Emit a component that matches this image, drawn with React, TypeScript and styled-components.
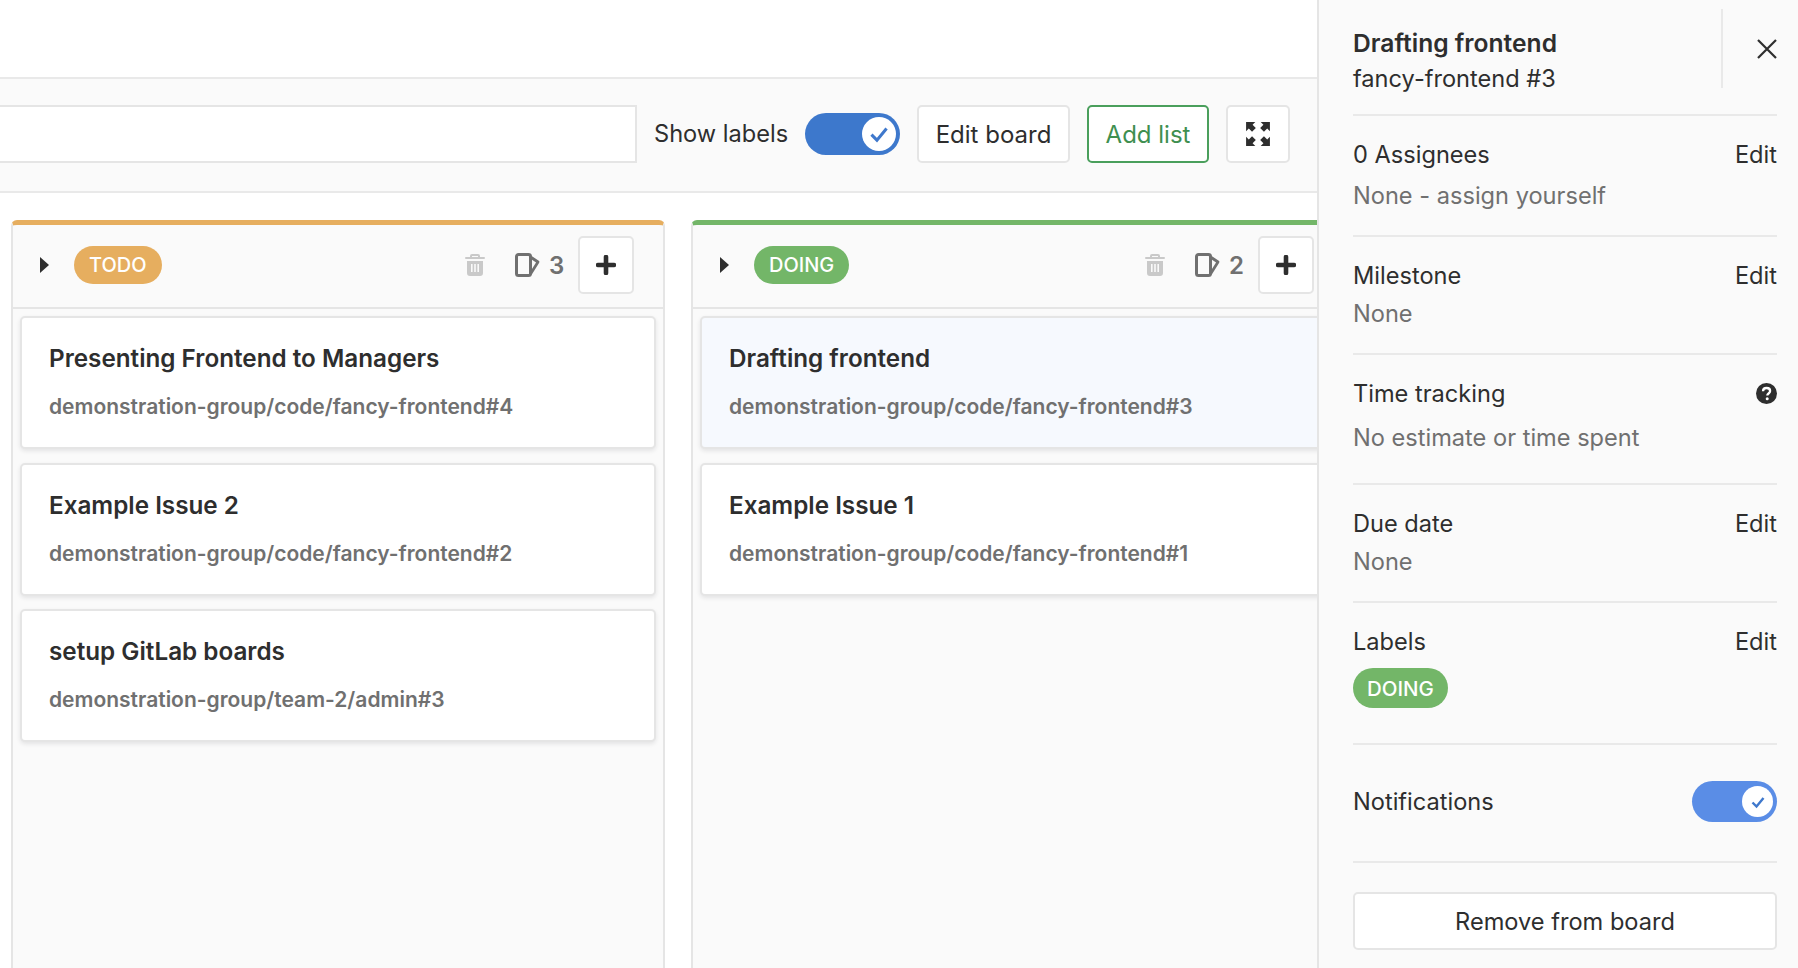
import { createGlobalStyle, styled } from "styled-components";

const GlobalStyle = createGlobalStyle`
    * {
        box-sizing: border-box;
    }
    html,
    body {
        margin: 0;
        height: 100%;
        overflow: hidden;
        background: #fff;
        font-family: Inter, "Liberation Sans", sans-serif;
        color: #2e2e2e;
    }
`;

const Page = styled.div`
    display: flex;
    width: 1798px;
    height: 968px;
    overflow: hidden;
`;

const Main = styled.div`
    flex: 0 0 1317px;
    display: flex;
    flex-direction: column;
    overflow: hidden;
`;

const TopBar = styled.div`
    height: 79px;
    flex: none;
    border-bottom: 2px solid #e9e9e9;
`;

const Toolbar = styled.div`
    height: 114px;
    flex: none;
    display: flex;
    align-items: center;
    background: #fafafa;
    border-bottom: 2px solid #e9e9e9;
    padding-bottom: 2px;
`;

const Search = styled.div`
    width: 637px;
    height: 58px;
    flex: none;
    background: #fff;
    border: 2px solid #e5e5e5;
    border-left: none;
`;

const ShowLabels = styled.span`
    margin-left: 17px;
    margin-top: -2px;
    font-size: 23.6px;
    width: 151px;
    flex: none;
    white-space: nowrap;
`;

const Toggle = styled.div<{ $w: number; $h: number; $color: string }>`
    width: ${(p) => p.$w}px;
    height: ${(p) => p.$h}px;
    flex: none;
    border-radius: ${(p) => p.$h / 2}px;
    background: ${(p) => p.$color};
    display: flex;
    align-items: center;
    justify-content: flex-end;
    padding-right: 4px;
`;

const Knob = styled.div<{ $size: number }>`
    width: ${(p) => p.$size}px;
    height: ${(p) => p.$size}px;
    border-radius: 50%;
    background: #fff;
    display: flex;
    align-items: center;
    justify-content: center;
`;

const Button = styled.div<{ $w: number; $green?: boolean }>`
    width: ${(p) => p.$w}px;
    height: 58px;
    flex: none;
    display: flex;
    align-items: center;
    justify-content: center;
    background: #fff;
    font-size: 24px;
    border-radius: 5px;
    border: 2px solid ${(p) => (p.$green ? "#4a9f5c" : "#e5e5e5")};
    color: ${(p) => (p.$green ? "#3f8f50" : "#2e2e2e")};
`;

const ToolbarButtons = styled.div`
    display: flex;
    gap: 17px;
    margin-left: 17px;
`;

const Board = styled.div`
    flex: 1;
    display: flex;
    gap: 26px;
    padding: 27px 0 0 11px;
    min-height: 0;
`;

const Column = styled.section<{ $color: string }>`
    flex: 0 0 652px;
    background: #fafafa;
    border: 2px solid #e5e5e5;
    border-top: 5px solid ${(p) => p.$color};
    border-bottom: none;
    border-radius: 6px 6px 0 0;
    display: flex;
    flex-direction: column;
`;

const ColumnHeader = styled.header`
    height: 84px;
    flex: none;
    display: flex;
    align-items: center;
    border-bottom: 2px solid #e5e5e5;
    padding: 0 29px 2px 27px;
`;

const Caret = styled.span`
    width: 0;
    height: 0;
    flex: none;
    border-left: 9px solid #2e2e2e;
    border-top: 8px solid transparent;
    border-bottom: 8px solid transparent;
`;

const Pill = styled.span<{ $color: string }>`
    display: inline-flex;
    align-items: center;
    justify-content: center;
    height: 38px;
    padding: 0 15px;
    border-radius: 19px;
    background: ${(p) => p.$color};
    color: #fff;
    font-size: 20px;
    font-weight: 500;
`;

const SideChip = styled(Pill)`
    height: 40px;
    border-radius: 20px;
    padding: 0 14px;
    font-size: 20.5px;
`;

const HeaderPill = styled.div`
    margin-left: 25px;
`;

const HeaderTools = styled.div`
    margin-left: auto;
    display: flex;
    align-items: center;
`;

const Count = styled.span`
    font-size: 24px;
    font-weight: 600;
    color: #707070;
    margin-left: 9px;
    width: 15px;
`;

const Trash = styled.svg`
    margin-right: 30px;
    flex: none;
`;

const AddButton = styled.div`
    width: 56px;
    height: 58px;
    margin-left: 14px;
    display: flex;
    align-items: center;
    justify-content: center;
    background: #fff;
    border: 2px solid #e5e5e5;
    border-radius: 5px;
`;

const Cards = styled.div`
    display: flex;
    flex-direction: column;
    gap: 13.5px;
    padding: 7px 7px;
`;

const Card = styled.article<{ $active?: boolean }>`
    height: 133px;
    flex: none;
    width: 636px;
    padding: 25px 27px 0;
    background: ${(p) => (p.$active ? "#f6f9fe" : "#fff")};
    border: 2px solid #e5e5e5;
    border-radius: 5px;
    box-shadow: 0 2px 4px rgba(31, 30, 36, 0.1);
`;

const CardTitle = styled.div`
    font-size: 24.25px;
    font-weight: 600;
    line-height: 32px;
    white-space: nowrap;
`;

const CardRef = styled.div`
    margin-top: 18px;
    font-size: 21px;
    font-weight: 600;
    line-height: 28px;
    color: #707070;
    white-space: nowrap;
`;

const Sidebar = styled.aside`
    flex: 1;
    background: #fafafa;
    border-left: 2px solid #e5e5e5;
    padding: 0 21px 0 34px;
    display: flex;
    flex-direction: column;
    font-size: 23.6px;
`;

const SideHead = styled.div`
    height: 116px;
    flex: none;
    border-bottom: 2px solid #e9e9e9;
    display: flex;
    padding-top: 9px;
`;

const SideTitles = styled.div`
    width: 370px;
    flex: none;
    height: 79px;
    border-right: 2px solid #e9e9e9;
    padding-top: 16px;
    line-height: 36px;
`;

const SideTitle = styled.div`
    font-weight: 600;
    font-size: 24.6px;
`;

const CloseBox = styled.div`
    flex: 1;
    display: flex;
    justify-content: flex-end;
    padding-top: 30px;
`;

const Block = styled.div<{ $h: number }>`
    height: ${(p) => p.$h}px;
    flex: none;
    border-bottom: 2px solid #e9e9e9;
`;

const BlockRow = styled.div<{ $top: number }>`
    display: flex;
    justify-content: space-between;
    align-items: center;
    height: 36px;
    margin-top: ${(p) => p.$top}px;
`;

const Muted = styled.div<{ $top: number }>`
    height: 36px;
    line-height: 36px;
    margin-top: ${(p) => p.$top}px;
    color: #707070;
`;

const ChipRow = styled.div`
    margin-top: 9px;
`;

const NotifyBlock = styled.div`
    height: 118px;
    flex: none;
    display: flex;
    align-items: center;
    justify-content: space-between;
    border-bottom: 2px solid #e9e9e9;
    padding-bottom: 3px;
`;

const RemoveButton = styled.div`
    height: 58px;
    flex: none;
    margin-top: 29px;
    display: flex;
    align-items: center;
    justify-content: center;
    background: #fff;
    border: 2px solid #e5e5e5;
    border-radius: 5px;
`;

const Check = ({ size, width }: { size: number; width: number }) => (
    <svg width={size} height={size} viewBox="0 0 16 16" fill="none">
        <path d="M2.5 8.5 6.5 12.5 13.5 4" stroke="#3f78cc" strokeWidth={width} />
    </svg>
);

const ExpandIcon = () => (
    <svg width="26" height="26" viewBox="0 0 24 24" fill="#2e2e2e">
        <path d="M1 1h8.500L7 3.500 10 6.500 6.500 10 3.500 7 1 9.500z" />
        <path d="M23 1h-8.500L17 3.500 14 6.500 17.500 10l3-3 2.500 2.500z" />
        <path d="M1 23h8.500L7 20.500l3-3L6.500 14l-3 3L1 14.500z" />
        <path d="M23 23h-8.500l2.500-2.500-3-3 3.500-3.500 3 3 2.500-2.500z" />
    </svg>
);

const TrashIcon = () => (
    <Trash width="20" height="22" viewBox="0 0 20 22" fill="#c9c9c9">
        <path d="M7 0h6a2 2 0 0 1 2 2v1h4a1 1 0 0 1 0 2H1a1 1 0 0 1 0-2h4V2a2 2 0 0 1 2-2zm0 2v1h6V2z" fillRule="evenodd" />
        <path d="M2 7h16v12a3 3 0 0 1-3 3H5a3 3 0 0 1-3-3zm4 3v8h1.600v-8zm3.200 0v8h1.600v-8zm3.200 0v8H14v-8z" fillRule="evenodd" />
    </Trash>
);

const IssueIcon = () => (
    <svg width="25" height="24" viewBox="0 0 25 24" fill="none">
        <path
            d="M3.500 1.500h10a2 2 0 0 1 2 2v17a2 2 0 0 1-2 2h-10a2 2 0 0 1-2-2v-17a2 2 0 0 1 2-2z"
            stroke="#707070"
            strokeWidth="3"
        />
        <path d="M15.500 4 23 9l-7.500 12" stroke="#707070" strokeWidth="2.800" strokeLinejoin="round" />
    </svg>
);

const PlusIcon = () => (
    <svg width="20" height="20" viewBox="0 0 20 20" fill="#2e2e2e">
        <path d="M7.700 2a2.300 2.300 0 0 1 4.600 0v5.700H18a2.300 2.300 0 0 1 0 4.600h-5.700V18a2.300 2.300 0 0 1-4.600 0v-5.700H2a2.300 2.300 0 0 1 0-4.600h5.700z" />
    </svg>
);

const CloseIcon = () => (
    <svg width="20" height="20" viewBox="0 0 20 20" fill="none">
        <path d="M1 1 19 19M19 1 1 19" stroke="#2e2e2e" strokeWidth="2.200" />
    </svg>
);

const HelpIcon = () => (
    <svg width="21" height="21" viewBox="0 0 21 21">
        <circle cx="10.500" cy="10.500" r="10.500" fill="#2e2e2e" />
        <path
            d="M7 8.200c0-2 1.600-3.200 3.600-3.200s3.500 1.200 3.500 3c0 2.400-2.800 2.500-2.800 4.400"
            fill="none"
            stroke="#fff"
            strokeWidth="2.300"
        />
        <circle cx="11.200" cy="15.700" r="1.500" fill="#fff" />
    </svg>
);

const columns = [
    {
        label: "TODO",
        color: "#e6ae5f",
        count: 3,
        cards: [
            { title: "Presenting Frontend to Managers", ref: "demonstration-group/code/fancy-frontend#4" },
            { title: "Example Issue 2", ref: "demonstration-group/code/fancy-frontend#2" },
            { title: "setup GitLab boards", ref: "demonstration-group/team-2/admin#3" },
        ],
    },
    {
        label: "DOING",
        color: "#73b668",
        count: 2,
        cards: [
            { title: "Drafting frontend", ref: "demonstration-group/code/fancy-frontend#3", active: true },
            { title: "Example Issue 1", ref: "demonstration-group/code/fancy-frontend#1" },
        ],
    },
];

export default function App() {
    return (
        <Page>
            <GlobalStyle />
            <Main>
                <TopBar />
                <Toolbar>
                    <Search />
                    <ShowLabels>Show labels</ShowLabels>
                    <Toggle $w={95} $h={42} $color="#3d78cc">
                        <Knob $size={34}>
                            <Check size={22} width={2.2} />
                        </Knob>
                    </Toggle>
                    <ToolbarButtons>
                        <Button $w={153}>Edit board</Button>
                        <Button $w={122} $green>
                            Add list
                        </Button>
                        <Button $w={64}>
                            <ExpandIcon />
                        </Button>
                    </ToolbarButtons>
                </Toolbar>
                <Board>
                    {columns.map((column) => (
                        <Column key={column.label} $color={column.color}>
                            <ColumnHeader>
                                <Caret />
                                <HeaderPill>
                                    <Pill $color={column.color}>{column.label}</Pill>
                                </HeaderPill>
                                <HeaderTools>
                                    <TrashIcon />
                                    <IssueIcon />
                                    <Count>{column.count}</Count>
                                    <AddButton>
                                        <PlusIcon />
                                    </AddButton>
                                </HeaderTools>
                            </ColumnHeader>
                            <Cards>
                                {column.cards.map((card) => (
                                    <Card key={card.title} $active={card.active}>
                                        <CardTitle>{card.title}</CardTitle>
                                        <CardRef>{card.ref}</CardRef>
                                    </Card>
                                ))}
                            </Cards>
                        </Column>
                    ))}
                </Board>
            </Main>
            <Sidebar>
                <SideHead>
                    <SideTitles>
                        <SideTitle>Drafting frontend</SideTitle>
                        <div>fancy-frontend #3</div>
                    </SideTitles>
                    <CloseBox>
                        <CloseIcon />
                    </CloseBox>
                </SideHead>
                <Block $h={121}>
                    <BlockRow $top={20}>
                        <span>0 Assignees</span>
                        <span>Edit</span>
                    </BlockRow>
                    <Muted $top={6}>None - assign yourself</Muted>
                </Block>
                <Block $h={118}>
                    <BlockRow $top={20}>
                        <span>Milestone</span>
                        <span>Edit</span>
                    </BlockRow>
                    <Muted $top={3}>None</Muted>
                </Block>
                <Block $h={130}>
                    <BlockRow $top={20}>
                        <span>Time tracking</span>
                        <HelpIcon />
                    </BlockRow>
                    <Muted $top={9}>No estimate or time spent</Muted>
                </Block>
                <Block $h={118}>
                    <BlockRow $top={20}>
                        <span>Due date</span>
                        <span>Edit</span>
                    </BlockRow>
                    <Muted $top={3}>None</Muted>
                </Block>
                <Block $h={142}>
                    <BlockRow $top={20}>
                        <span>Labels</span>
                        <span>Edit</span>
                    </BlockRow>
                    <ChipRow>
                        <SideChip $color="#73b668">DOING</SideChip>
                    </ChipRow>
                </Block>
                <NotifyBlock>
                    <span>Notifications</span>
                    <Toggle $w={85} $h={41} $color="#5a8de6">
                        <Knob $size={31}>
                            <Check size={16} width={2.4} />
                        </Knob>
                    </Toggle>
                </NotifyBlock>
                <RemoveButton>Remove from board</RemoveButton>
            </Sidebar>
        </Page>
    );
}
